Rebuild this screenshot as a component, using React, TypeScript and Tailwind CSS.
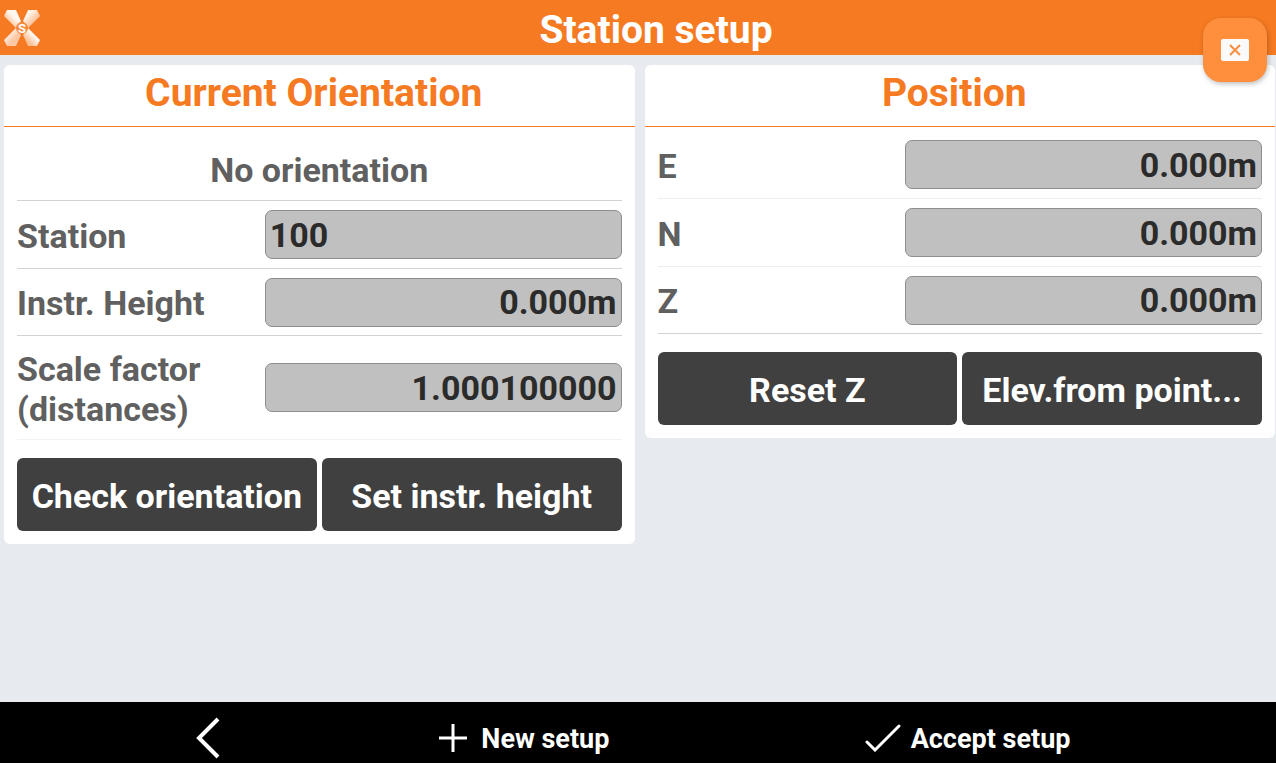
import type { ReactNode } from "react";

type FieldProps = {
    id: string;
    label: string;
    value: string;
    align?: "left" | "right";
    className?: string;
};

function Field({ id, label, value, align = "right", className = "h-[67px] border-[#d2d2d2]" }: FieldProps) {
    return (
        <div className={`flex items-center border-b ${className}`}>
            <label htmlFor={id} className="w-[41%] pt-[2px] pr-10 text-[#606060]">
                {label}
            </label>
            <input
                id={id}
                type="text"
                defaultValue={value}
                className={`h-[49px] min-w-0 flex-1 rounded-[7px] border-1 border-[#8e8e8e] bg-[#c0c0c0] px-1 text-[#2b2b2b] ${
                    align === "right" ? "text-right" : "text-left"
                }`}
            />
        </div>
    );
}

function Panel({ title, children }: { title: string; children: ReactNode }) {
    return (
        <section className="min-w-0 flex-1 rounded-[6px] bg-white">
            <h2 className="border-b border-[#f57a22] pt-[6px] pr-[11px] pb-[11px] text-center text-[39px] leading-[44px] text-[#f57a22]">
                {title}
            </h2>
            <div className="px-[13px] pb-[13px]">{children}</div>
        </section>
    );
}

function ActionButton({ children }: { children: ReactNode }) {
    return (
        <button
            type="button"
            className="h-[73px] min-w-0 flex-1 rounded-[6px] bg-[#404040] pt-[2px] whitespace-nowrap text-white"
        >
            {children}
        </button>
    );
}

function Logo() {
    return (
        <svg viewBox="0 0 36 36" className="h-9 w-9" aria-hidden="true">
            <defs>
                <linearGradient id="armDown" x1="0" y1="1" x2="1" y2="0">
                    <stop offset="0.25" stopColor="#fbbd92" />
                    <stop offset="0.6" stopColor="#fff6ee" />
                </linearGradient>
                <linearGradient id="armUp" x1="0" y1="0" x2="1" y2="1">
                    <stop offset="0.3" stopColor="#fff1e6" />
                    <stop offset="0.6" stopColor="#fcc7a2" />
                </linearGradient>
            </defs>
            <path d="M3 0h9l5 11-5 7L0 6z" fill="url(#armDown)" />
            <path d="M12 18l5 7-5 11H3l-3-6z" fill="url(#armUp)" />
            <path d="M24 0h9l3 6-12 12-5-7z" fill="url(#armUp)" />
            <path d="M24 18l12 12-3 6h-9l-5-11z" fill="url(#armDown)" />
            <circle cx="18" cy="18" r="6" fill="#f68b40" />
            <text x="18" y="23" textAnchor="middle" fontSize="13" fill="#fff">
                S
            </text>
        </svg>
    );
}

export default function App() {
    return (
        <div className="flex min-h-screen flex-col bg-[#e7ebf0] font-['Roboto',sans-serif] text-[34px] leading-10 font-bold">
            <header className="relative flex h-[55px] items-center bg-[#f57a22] px-1 text-white">
                <Logo />
                <h1 className="flex-1 pt-[5px] text-center text-[39px] leading-[44px]">Station setup</h1>
                <button
                    type="button"
                    aria-label="Close"
                    className="absolute top-[18px] right-[9px] flex h-16 w-16 items-center justify-center rounded-[18px] bg-[#ff8f3c] shadow-[1px_2px_5px_rgba(0,0,0,0.25)]"
                >
                    <svg viewBox="0 0 28 22" className="h-[22px] w-7">
                        <rect width="28" height="22" rx="2" fill="#fafafa" />
                        <path d="M9 6l10 10M19 6L9 16" stroke="#f98d3e" strokeWidth="2" />
                    </svg>
                </button>
            </header>

            <main className="flex flex-1 items-start gap-[10px] pt-[10px] pr-px pb-4 pl-1">
                <Panel title="Current Orientation">
                    <p className="h-[74px] border-b border-[#d2d2d2] pt-[23px] text-center text-[#606060]">No orientation</p>
                    <Field id="station" label="Station" value="100" align="left" className="h-[68px] border-[#d2d2d2]" />
                    <Field id="height" label="Instr. Height" value="0.000m" />
                    <Field
                        id="scale"
                        label="Scale factor (distances)"
                        value="1.000100000"
                        className="h-[104px] border-[#f2f2f2]"
                    />
                    <div className="mt-[18px] flex gap-[5px]">
                        <ActionButton>Check orientation</ActionButton>
                        <ActionButton>Set instr. height</ActionButton>
                    </div>
                </Panel>

                <Panel title="Position">
                    <div className="pt-1">
                        <Field id="east" label="E" value="0.000m" className="h-[68px] border-[#eeeeee]" />
                        <Field id="north" label="N" value="0.000m" className="h-[68px] border-[#eeeeee]" />
                        <Field id="elevation" label="Z" value="0.000m" />
                    </div>
                    <div className="mt-[18px] flex gap-[5px]">
                        <ActionButton>Reset Z</ActionButton>
                        <ActionButton>Elev.from point...</ActionButton>
                    </div>
                </Panel>
            </main>

            <footer className="grid h-[61px] grid-cols-3 bg-black pt-3 text-[27px] text-white">
                <button type="button" aria-label="Back" className="flex h-12 items-center justify-center pr-[10px]">
                    <svg viewBox="0 0 26 42" className="h-[42px] w-[26px]" fill="none" stroke="currentColor" strokeWidth="4">
                        <path d="M23 2L4 21l19 19" />
                    </svg>
                </button>
                <button type="button" className="flex h-12 items-center gap-[14px] pl-[14px]">
                    <svg viewBox="0 0 28 28" className="h-7 w-7" stroke="currentColor" strokeWidth="3">
                        <path d="M14 0v28M0 14h28" />
                    </svg>
                    <span className="pt-[2px]">New setup</span>
                </button>
                <button type="button" className="flex h-12 items-center gap-[10px] pl-[14px]">
                    <svg viewBox="0 0 36 28" className="h-7 w-9" fill="none" stroke="currentColor" strokeWidth="3" strokeLinecap="round">
                        <path d="M2 18l8 8L34 2" />
                    </svg>
                    <span className="pt-[2px]">Accept setup</span>
                </button>
            </footer>
        </div>
    );
}
